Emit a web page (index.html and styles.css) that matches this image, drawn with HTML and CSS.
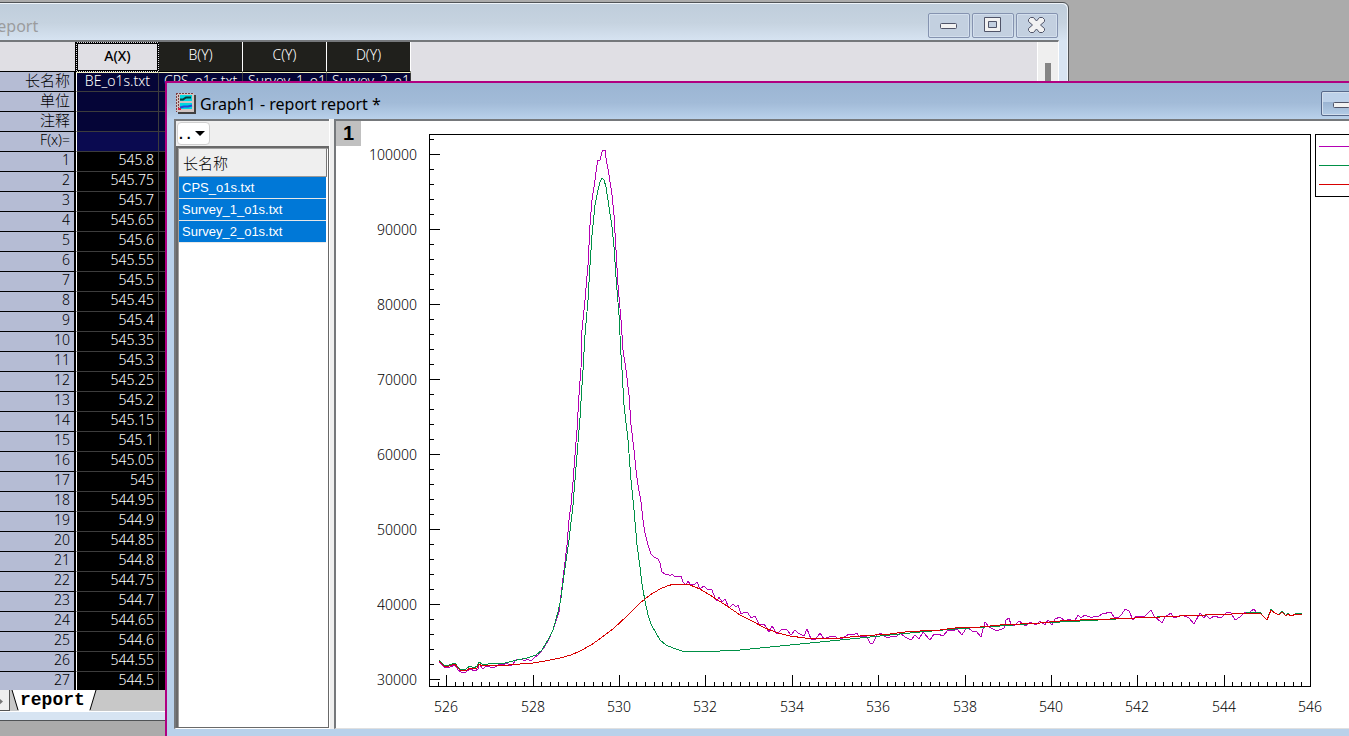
FILE: index.html
```html
<!DOCTYPE html>
<html lang="zh-CN">
<head>
    <meta charset="UTF-8">
    <meta name="viewport" content="width=device-width, initial-scale=1.0">
    <title>Graph1 - report report</title>
    <link rel="stylesheet" href="styles.css">
</head>
<body>

<section class="window report-window">
    <header class="title-bar">
        <h2>report</h2>
        <div class="window-buttons">
            <button aria-label="Minimize"><svg width="22" height="20"><rect class="icon-shape" x="2.500" y="8.500" width="16" height="5" rx="1"/></svg></button>
            <button aria-label="Maximize"><svg width="22" height="20"><path class="icon-shape" fill-rule="evenodd" d="M2.500 2.500h16v14h-16zM6.500 6.500v6h8v-6z"/></svg></button>
            <button aria-label="Close"><svg width="22" height="20"><path class="icon-shape" d="M2.500 4.500l2-2h3l3 3.500 3-3.500h3l2 2v2l-4 3.500 4 3.500v2l-2 2h-3l-3-3.500-3 3.500h-3l-2-2v-2l4-3.500-4-3.500z"/></svg></button>
        </div>
    </header>
    <div class="sheet-area">
        <div class="sheet">
            <table>
                <colgroup><col class="col-head"><col class="col-a"><col><col><col></colgroup>
                <thead>
                    <tr><th></th><th class="active">A(X)</th><th>B(Y)</th><th>C(Y)</th><th>D(Y)</th></tr>
                </thead>
                <tbody>
                    <tr class="label long-name"><th>长名称</th><td>BE_o1s.txt</td><td>CPS_o1s.txt</td><td>Survey_1_o1s.txt</td><td>Survey_2_o1s.txt</td></tr>
                    <tr class="label"><th>单位</th><td></td><td></td><td></td><td></td></tr>
                    <tr class="label"><th>注释</th><td></td><td></td><td></td><td></td></tr>
                    <tr class="label formula"><th>F(x)=</th><td></td><td></td><td></td><td></td></tr>
                    <tr><th>1</th><td>545.8</td><td></td><td></td><td></td></tr>
                    <tr><th>2</th><td>545.75</td><td></td><td></td><td></td></tr>
                    <tr><th>3</th><td>545.7</td><td></td><td></td><td></td></tr>
                    <tr><th>4</th><td>545.65</td><td></td><td></td><td></td></tr>
                    <tr><th>5</th><td>545.6</td><td></td><td></td><td></td></tr>
                    <tr><th>6</th><td>545.55</td><td></td><td></td><td></td></tr>
                    <tr><th>7</th><td>545.5</td><td></td><td></td><td></td></tr>
                    <tr><th>8</th><td>545.45</td><td></td><td></td><td></td></tr>
                    <tr><th>9</th><td>545.4</td><td></td><td></td><td></td></tr>
                    <tr><th>10</th><td>545.35</td><td></td><td></td><td></td></tr>
                    <tr><th>11</th><td>545.3</td><td></td><td></td><td></td></tr>
                    <tr><th>12</th><td>545.25</td><td></td><td></td><td></td></tr>
                    <tr><th>13</th><td>545.2</td><td></td><td></td><td></td></tr>
                    <tr><th>14</th><td>545.15</td><td></td><td></td><td></td></tr>
                    <tr><th>15</th><td>545.1</td><td></td><td></td><td></td></tr>
                    <tr><th>16</th><td>545.05</td><td></td><td></td><td></td></tr>
                    <tr><th>17</th><td>545</td><td></td><td></td><td></td></tr>
                    <tr><th>18</th><td>544.95</td><td></td><td></td><td></td></tr>
                    <tr><th>19</th><td>544.9</td><td></td><td></td><td></td></tr>
                    <tr><th>20</th><td>544.85</td><td></td><td></td><td></td></tr>
                    <tr><th>21</th><td>544.8</td><td></td><td></td><td></td></tr>
                    <tr><th>22</th><td>544.75</td><td></td><td></td><td></td></tr>
                    <tr><th>23</th><td>544.7</td><td></td><td></td><td></td></tr>
                    <tr><th>24</th><td>544.65</td><td></td><td></td><td></td></tr>
                    <tr><th>25</th><td>544.6</td><td></td><td></td><td></td></tr>
                    <tr><th>26</th><td>544.55</td><td></td><td></td><td></td></tr>
                    <tr><th>27</th><td>544.5</td><td></td><td></td><td></td></tr>
                </tbody>
            </table>
        </div>
        <div class="scrollbar"><div class="thumb"></div></div>
    </div>
    <footer class="sheet-tabs">
        <button class="tab-scroll" aria-label="Next sheet"><svg width="6" height="9"><path d="M0 1l4 3.500L0 8z"/></svg></button>
        <button class="sheet-tab"><svg width="8" height="21"><path d="M1 0L7 20H8V0z"/><path class="edge" d="M1 0L7 20"/></svg><span>report</span><svg width="8" height="21"><path d="M7 0L1 20H0V0z"/><path class="edge" d="M7 0L1 20"/></svg></button>
    </footer>
</section>

<section class="window graph-window">
    <header class="title-bar">
        <svg class="graph-icon" width="20" height="21">
            <path fill="#404040" d="M2 2h18v19H2z"/>
            <path fill="#d0c4c2" d="M0 0h18v19H0z"/>
            <path fill="none" stroke="#7c3c40" stroke-dasharray="2 1" d="M0 .5h18M.5 0v19M2.500 2v14"/>
            <path fill="#00d8e0" d="M4 2h12v6H4zM4 10h12v6H4z"/>
            <path fill="none" stroke="#063c3c" stroke-width="2" d="M4 6.500h3l3-2h5"/>
            <path fill="none" stroke="#2448d8" stroke-width="2" d="M4 14.500l4-1h4l4-1"/>
            <path fill="#e02040" d="M2 15h3v2H2z"/>
        </svg>
        <h2>Graph1 - report report *</h2>
        <div class="window-buttons">
            <button aria-label="Minimize"><svg width="22" height="20"><rect class="icon-shape" x="2.500" y="8.500" width="16" height="5" rx="1"/></svg></button>
            <button aria-label="Maximize"><svg width="22" height="20"><path class="icon-shape" fill-rule="evenodd" d="M2.500 2.500h16v14h-16zM6.500 6.500v6h8v-6z"/></svg></button>
            <button aria-label="Close"><svg width="22" height="20"><path class="icon-shape" d="M2.500 4.500l2-2h3l3 3.500 3-3.500h3l2 2v2l-4 3.500 4 3.500v2l-2 2h-3l-3-3.500-3 3.500h-3l-2-2v-2l4-3.500-4-3.500z"/></svg></button>
        </div>
    </header>
    <div class="graph-body">
        <aside class="object-panel">
            <div class="panel-toolbar">
                <button class="menu-button"><span>. .</span><svg width="10" height="6"><path d="M0 0h10L5 5z"/></svg></button>
            </div>
            <div class="plot-list">
                <div class="list-head">长名称</div>
                <ul>
                    <li>CPS_o1s.txt</li>
                    <li>Survey_1_o1s.txt</li>
                    <li>Survey_2_o1s.txt</li>
                </ul>
            </div>
        </aside>
        <div class="graph-page">
            <button class="layer-button">1</button>
            <svg class="chart" width="1120" height="607" viewBox="336 121 1120 607">
                <g class="axis">
                    <rect x="429.500" y="134.500" width="881" height="552"/>
                    <path d="M446.500 686v-11M533.500 686v-11M619.500 686v-11M705.500 686v-11M792.500 686v-11M878.500 686v-11M965.500 686v-11M1051.500 686v-11M1137.500 686v-11M1224.500 686v-11"/>
                    <path d="M430 154.500h10M430 229.500h10M430 304.500h10M430 379.500h10M430 454.500h10M430 529.500h10M430 604.500h10M430 679.500h10"/>
                    <path class="minor-x" d="M437.500 684H1308"/>
                    <path class="minor-y" d="M432 139V686"/>
                </g>
                <g class="y-labels">
                    <text x="417" y="160">100000</text>
                    <text x="417" y="235">90000</text>
                    <text x="417" y="310">80000</text>
                    <text x="417" y="385">70000</text>
                    <text x="417" y="460">60000</text>
                    <text x="417" y="535">50000</text>
                    <text x="417" y="610">40000</text>
                    <text x="417" y="685">30000</text>
                </g>
                <g class="x-labels">
                    <text x="446" y="712">526</text>
                    <text x="533" y="712">528</text>
                    <text x="619" y="712">530</text>
                    <text x="705" y="712">532</text>
                    <text x="792" y="712">534</text>
                    <text x="878" y="712">536</text>
                    <text x="965" y="712">538</text>
                    <text x="1051" y="712">540</text>
                    <text x="1137" y="712">542</text>
                    <text x="1224" y="712">544</text>
                    <text x="1310" y="712">546</text>
                </g>
                <polyline class="plot cps" points="439,662 444,667 450,667 455,665 458,670 461,672 466,672 470,669 475,671 478,669 479,664 483,669 486,666 490,667 494,668 499,664 503,665 507,663 511,666 513,664 516,660 521,659 525,661 527,659 531,661 534,658 538,655 543,649 548,641 553,630 559,612 561,595 564,570 567,545 569,520 571,505 573,482 575,455 577,430 579,395 581,368 582,330 585,300 588,265 590,225 592,200 595,180 597,165 598,160 600,160 602,152 603,150 605,150 606,158 609,175 612,195 614,215 616,250 618,285 621,320 623,350 626,370 629,395 631,425 634,450 636,470 638,485 641,502 643,520 645,533 648,545 651,554 654,557 658,559 660,563 662,572 665,574 668,574 670,576 672,574 675,577 677,576 681,576 683,582 686,585 688,581 690,584 695,584 697,582 700,589 704,586 707,589 712,590 715,598 717,601 719,597 722,602 725,599 729,608 733,604 736,607 738,605 741,614 745,612 748,613 751,618 755,616 759,624 764,624 769,632 772,626 777,634 782,629 787,630 791,635 795,630 798,633 802,635 804,636 807,629 811,639 815,640 820,633 824,639 829,637 834,636 839,639 843,638 849,634 853,635 857,633 859,637 864,636 867,637 870,643 873,643 877,635 881,633 884,636 888,638 892,636 896,637 900,633 905,637 911,640 915,635 919,639 923,632 930,640 934,634 938,634 943,636 948,630 952,631 957,629 962,635 967,627 972,631 976,631 981,637 985,622 989,627 997,631 1004,628 1006,620 1009,618 1011,625 1015,625 1019,621 1026,626 1030,622 1036,625 1040,621 1045,625 1048,620 1052,625 1055,619 1060,617 1065,621 1070,619 1074,622 1078,615 1081,618 1085,615 1092,618 1094,616 1098,617 1102,614 1111,612 1114,617 1119,617 1122,614 1125,609 1129,611 1133,620 1136,616 1145,616 1151,610 1154,616 1162,623 1165,617 1171,613 1174,618 1182,615 1189,618 1194,624 1200,613 1204,618 1206,615 1210,619 1214,616 1221,618 1227,612 1231,613 1235,620 1240,617 1245,612 1250,612 1254,609 1257,613 1260,612"/>
                <polyline class="plot survey-1" points="439,660 444,665 449,665 455,663 458,667 460,669 466,669 470,666 474,668 477,666 479,662 482,664 488,664 505,663 517,660 527,658 536,655 542,650 548,640 553,630 558,612 561,598 564,575 569,540 573,505 577,455 580,418 582,385 583,370 585,335 588,300 590,265 592,235 595,205 598,190 600,182 602,178 604,180 606,187 609,207 612,227 614,247 616,277 619,315 621,355 622,370 624,405 628,440 631,480 634,510 637,545 640,567 642,584 645,601 648,615 651,624 656,633 660,640 666,645 673,648 682,651 700,652 720,651 740,650 770,647 800,644 830,641 860,638 890,635 920,632 955,629 1000,626 1040,623 1080,621 1135,618 1180,616 1232,614 1260,612 1262,615 1267,620 1271,609 1275,613 1279,615 1282,611 1286,616 1288,613 1291,616 1297,613 1302,614"/>
                <polyline class="plot survey-2" points="439,661 444,666 449,666 455,664 458,668 460,670 466,671 470,668 474,669 477,668 479,664 482,666 509,665 520,664 533,663 545,661 560,658 571,655 580,651 591,645 601,638 613,629 627,616 640,603 650,595 660,589 667,586 674,584 682,584 690,585 700,589 713,597 727,606 740,615 752,621 765,628 778,633 790,636 805,638 825,638 840,638 860,636 890,634 905,632 920,631 940,630 955,628 980,627 1000,625 1020,624 1040,623 1060,621 1080,620 1110,619 1135,618 1160,617 1180,616 1205,615 1232,614 1260,613 1262,615 1267,620 1271,610 1275,613 1279,615 1282,612 1286,616 1288,614 1291,616 1296,614 1302,614"/>
                <g class="legend">
                    <rect class="legend-box" x="1315.500" y="134.500" width="130" height="62"/>
                    <path class="plot cps" d="M1319 146h40"/>
                    <path class="plot survey-1" d="M1319 165h40"/>
                    <path class="plot survey-2" d="M1319 184h40"/>
                </g>
            </svg>
        </div>
    </div>
</section>

</body>
</html>
```
FILE: styles.css
```css
:root {
    --desktop: #ababab;
    --purple: #b400b4;
    --green: #009046;
    --red: #d80000;
}

* {
    box-sizing: border-box;
}

body {
    margin: 0;
    height: 100vh;
    position: relative;
    overflow: hidden;
    background: var(--desktop);
    font-family: "Noto Sans", "Noto Sans CJK SC", sans-serif;
    font-size: 14px;
    font-weight: 300;
    color: #000;
}

button {
    font: inherit;
    color: inherit;
    padding: 0;
    border: 0;
    background: none;
}

/* windows */
.window {
    position: absolute;
    display: flex;
    flex-direction: column;
}

.report-window {
    left: -12px;
    top: 2px;
    width: 1081px;
    bottom: 15px;
    padding-right: 9px;
    padding-bottom: 8px;
    border: 1px solid #505356;
    border-radius: 0 6px 0 0;
    background: linear-gradient(#bfcddb, #c6d3e0 20px, #d7e4f2 38px);
    box-shadow: inset -1px 1px 0 #eef4fa;
}

.graph-window {
    left: 165px;
    right: -114px;
    top: 81px;
    bottom: -2px;
    padding: 0 7px 7px;
    border: 2px solid #b00080;
    background: linear-gradient(#9bb5d3, #a2bbd8 20px, #b9d1ea 36px);
}

.title-bar {
    display: flex;
    align-items: center;
    height: 37px;
    flex: none;
}

.graph-window .title-bar {
    height: 36px;
    padding-top: 5px;
}

.title-bar h2 {
    flex: 1;
    margin: 0;
    font-size: 16px;
    font-weight: 400;
}

.report-window h2 {
    padding: 8px 0 0 2px;
    color: #9b9c9e;
}

.graph-icon {
    margin: 0 4px 0 2px;
}

.window-buttons {
    display: flex;
    gap: 2px;
    padding: 7px 1px 0 0;
}

.graph-window .window-buttons {
    padding: 0 3px 0 0;
}

.window-buttons button {
    display: flex;
    align-items: center;
    justify-content: center;
    width: 42px;
    height: 25px;
    border: 1px solid #8593b0;
    border-radius: 2px;
    background: #c3d0e0;
    box-shadow: inset 0 0 0 1px #d3dfed;
}

.graph-window .window-buttons button {
    border-color: #56688a;
    background: linear-gradient(#bdd1e9 45%, #9bb4d2 45%, #b4cce6);
}

.icon-shape {
    fill: #f2f2f2;
    stroke: #505468;
}

/* worksheet */
.sheet-area {
    flex: 1;
    min-height: 0;
    display: flex;
    border-top: 2px solid #75787b;
    border-right: 1px solid #fff;
    background: #e0dfe4;
}

.sheet {
    flex: 1;
    overflow: hidden;
}

.scrollbar {
    width: 21px;
    padding: 21px 7px 0 7px;
    border-left: 1px solid #fff;
    background: #efefef;
}

.thumb {
    width: 6px;
    height: 90px;
    background: #858585;
}

table {
    table-layout: fixed;
    width: 422px;
    border-spacing: 0;
}

col {
    width: 84px;
}

.col-head {
    width: 87px;
}

.col-a {
    width: 83px;
}

th, td {
    height: 20px;
    padding: 0 4px 3px;
    font-weight: 300;
    line-height: 16px;
    text-align: right;
    white-space: nowrap;
    overflow: hidden;
}

thead th {
    height: 30px;
    text-align: center;
    color: #fff;
    background: #20201c;
    border-right: 1px solid #fff;
    border-bottom: 1px solid #000;
}

thead th:first-child {
    background: #e0dfe4;
    border-right-color: #000;
}

thead .active {
    color: #000;
    font-weight: 500;
    background: #e0dfe4;
    border: 1px dotted #000;
    outline: 1px solid #000;
    outline-offset: -2px;
}

tbody th {
    background: #b5bcd4;
    border-right: 2px solid #000;
    border-bottom: 1px solid #000;
}

tbody td {
    color: #fff;
    background: #000;
    border-right: 1px solid #3c3c3c;
    border-bottom: 1px solid #3c3c3c;
}

tbody td:nth-child(2) {
    border-left: 1px solid #fff;
}

.label th {
    font-size: 15px;
}

.label td {
    text-align: center;
    background: #050537;
}

.long-name td {
    border-top: 1px solid #f0f0c0;
    padding-bottom: 2px;
}

.label td:nth-child(n+3) {
    text-align: left;
    padding-left: 5px;
}

.formula td {
    background: #0a0a50;
}

.formula th {
    font-size: 14px;
}

.sheet-tabs {
    display: flex;
    height: 22px;
    flex: none;
    border-bottom: 1px solid #fff;
    background: #c8c8c8;
}

.tab-scroll {
    width: 21px;
    padding-left: 6px;
    border-right: 1px solid #555;
    border-bottom: 1px solid #555;
    background: #efefef;
}

.tab-scroll path {
    fill: #777;
}

.sheet-tab {
    display: flex;
    align-items: flex-start;
    margin-left: 1px;
    font-family: "Liberation Mono", monospace;
    font-size: 18px;
    font-weight: 700;
    line-height: 21px;
}

.sheet-tab span {
    padding: 0 4px 0 1px;
    background: #fff;
}

.sheet-tab path {
    fill: #fff;
}

.sheet-tab .edge {
    fill: none;
    stroke: #000;
    stroke-width: 1;
}

/* graph window */
.graph-body {
    flex: 1;
    min-height: 0;
    display: flex;
    gap: 5px;
}

.object-panel {
    width: 155px;
    display: flex;
    flex-direction: column;
    border: 2px solid #75787b;
    border-width: 2px 0 0 2px;
    border-bottom: 1px solid #fff;
    background: #efefef;
    box-shadow: 1px 0 0 #fff, 5px 0 0 #efefef;
}

.panel-toolbar {
    height: 25px;
    padding: 1px;
}

.menu-button {
    display: flex;
    align-items: center;
    gap: 4px;
    width: 33px;
    height: 23px;
    padding-left: 1px;
    border: 1px solid #d0d0d0;
    border-radius: 4px;
    background: #fff;
    font-family: "Liberation Sans", sans-serif;
    font-weight: 700;
}

.plot-list {
    flex: 1;
    padding: 0 1px;
    border: 2px solid #696969;
    border-right-width: 1px;
    border-bottom-width: 1px;
    background: #fff;
    box-shadow: inset 1px 1px 0 #a0a0a0;
}

.list-head {
    height: 29px;
    padding: 0 4px;
    font-size: 15px;
    line-height: 28px;
    background: #efefef;
    border-top: 1px solid #a0a0a0;
    border-right: 1px solid #777;
    border-bottom: 1px solid #999;
}

ul {
    margin: 0;
    padding: 0;
    list-style: none;
}

li {
    height: 22px;
    margin-right: 1px;
    padding-left: 3px;
    font-family: "Liberation Sans", sans-serif;
    font-size: 13px;
    line-height: 21px;
    color: #fff;
    background: #0078d7;
    border-bottom: 1px solid #e8e8e8;
}

.graph-page {
    flex: 1;
    position: relative;
    overflow: hidden;
    border: 2px solid #75787b;
    border-width: 2px 0 0 2px;
    border-bottom: 1px solid #e0e0e0;
    background: #fff;
}

.layer-button {
    position: absolute;
    left: 0;
    top: 0;
    width: 25px;
    height: 25px;
    background: #c0c0c0;
    font-family: "Liberation Sans", sans-serif;
    font-size: 20px;
    font-weight: 700;
}

/* chart */
.chart {
    display: block;
}

.axis, .plot, .legend-box {
    fill: none;
    stroke: #000;
    stroke-width: 1;
    shape-rendering: crispEdges;
}

.minor-x {
    stroke-width: 5;
    stroke-dasharray: 1 7.64;
}

.minor-y {
    stroke-width: 4;
    stroke-dasharray: 1 14;
}

.y-labels {
    text-anchor: end;
}

.x-labels {
    text-anchor: middle;
}

.plot.cps {
    stroke: var(--purple);
}

.plot.survey-1 {
    stroke: var(--green);
}

.plot.survey-2 {
    stroke: var(--red);
}
```
